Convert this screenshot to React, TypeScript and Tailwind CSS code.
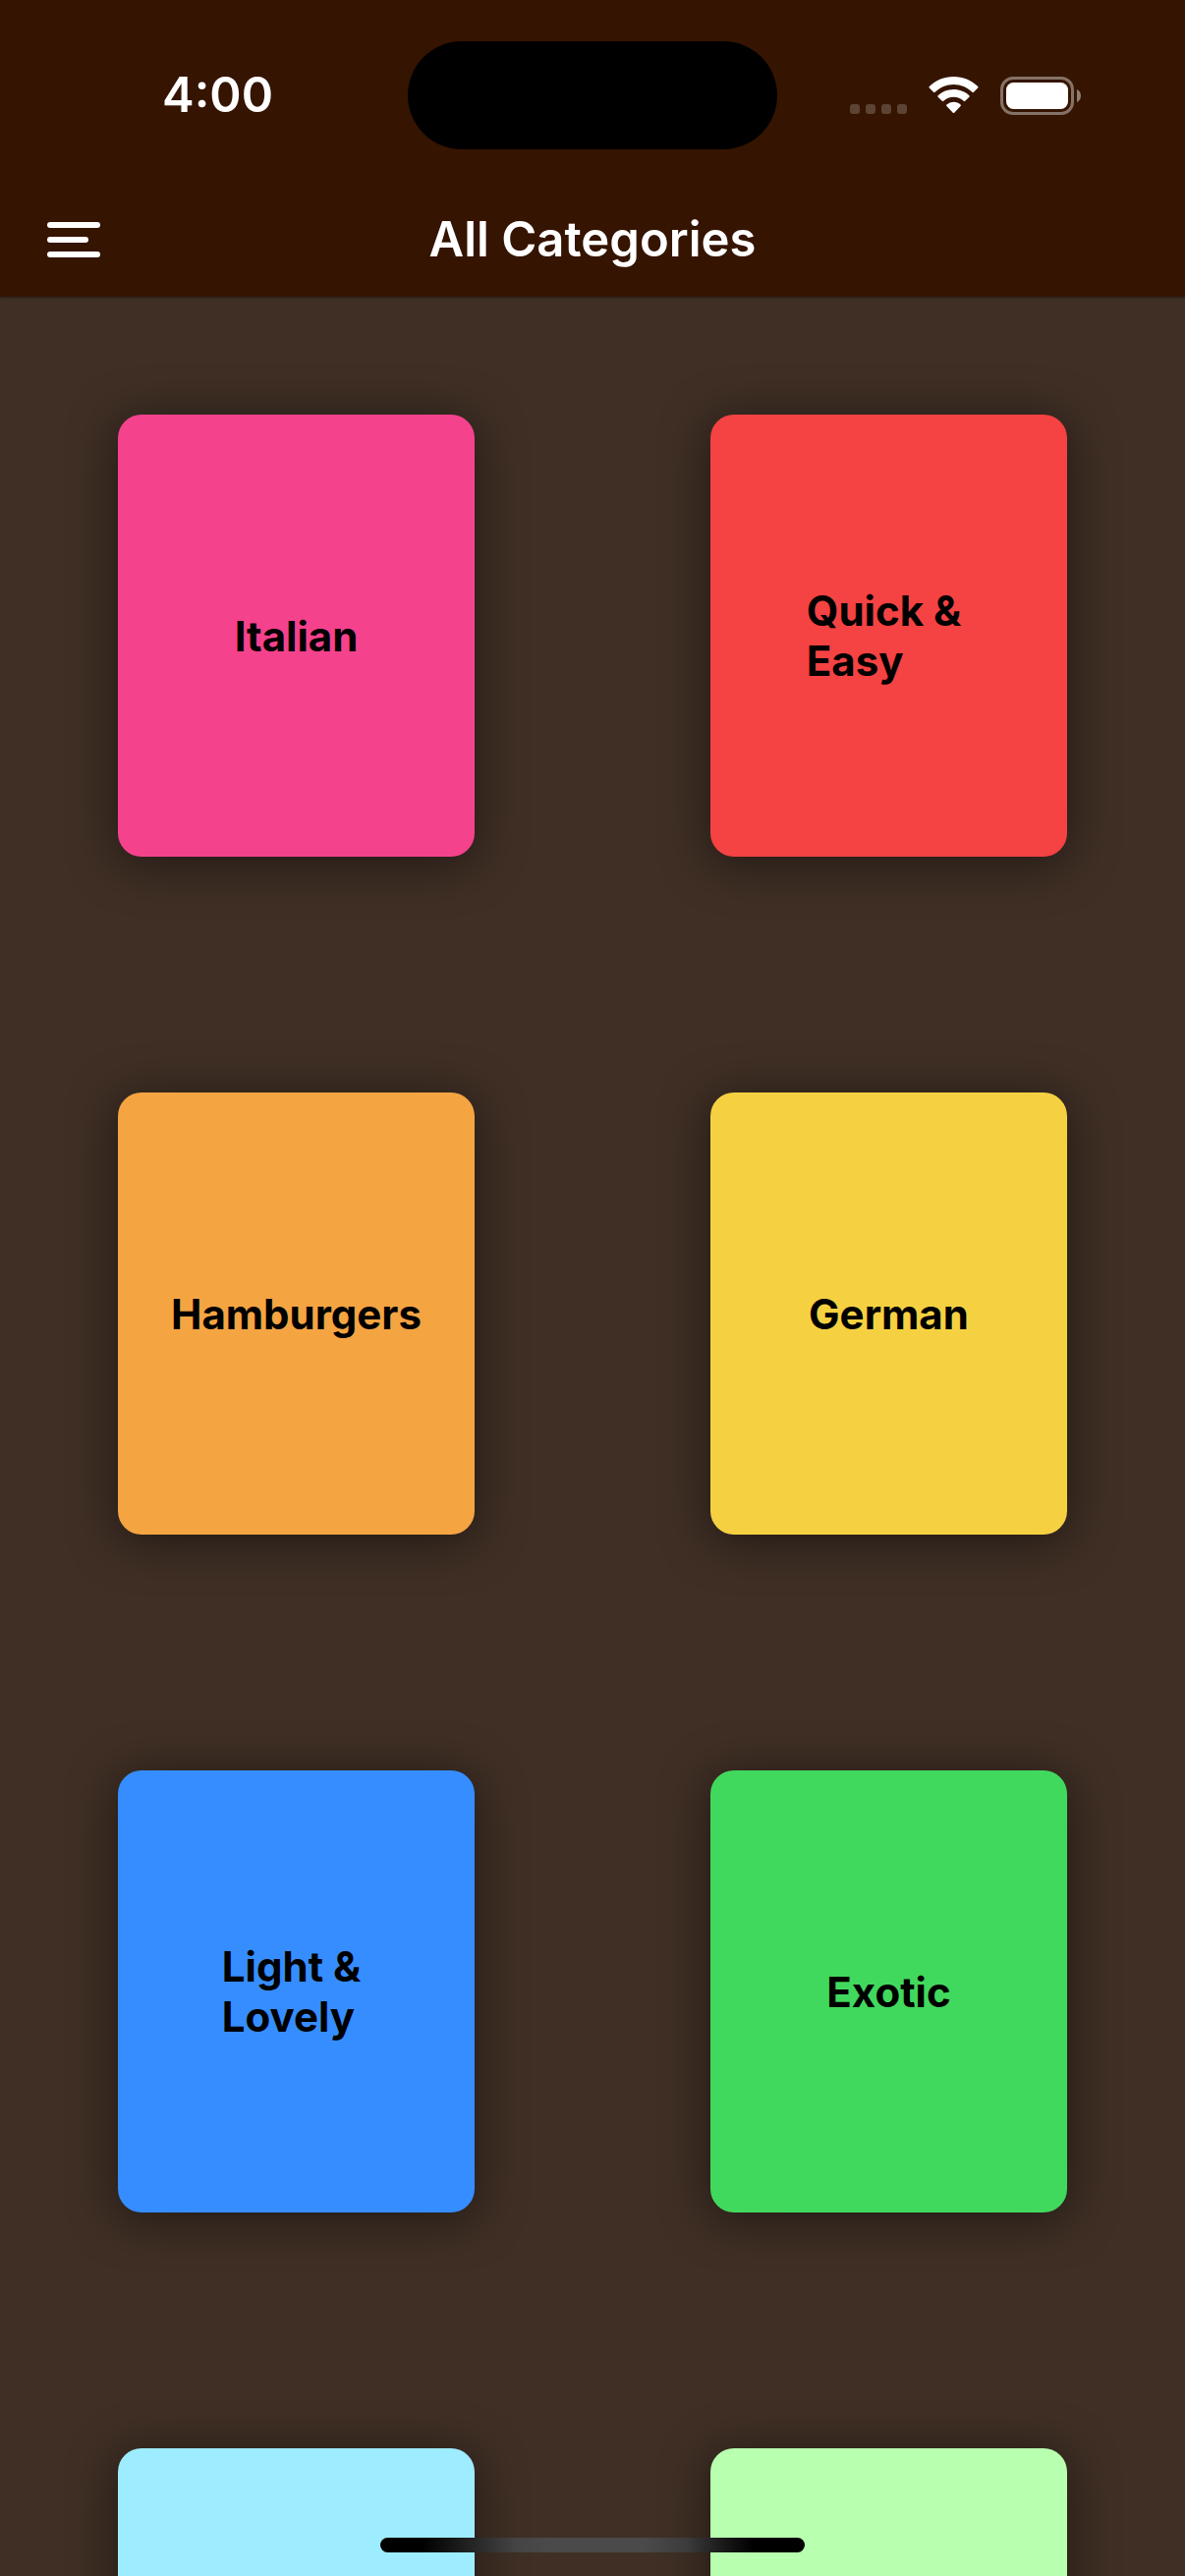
type Category = { id: string; lines: string; color: string };

const categories: Category[] = [
  { id: 'c1', lines: 'Italian', color: 'bg-[#f5428d]' },
  { id: 'c2', lines: 'Quick & \nEasy', color: 'bg-[#f54242]' },
  { id: 'c3', lines: 'Hamburgers', color: 'bg-[#f5a442]' },
  { id: 'c4', lines: 'German', color: 'bg-[#f5d142]' },
  { id: 'c5', lines: 'Light & \nLovely', color: 'bg-[#368dff]' },
  { id: 'c6', lines: 'Exotic', color: 'bg-[#41d95d]' },
  { id: 'c7', lines: '', color: 'bg-[#9eecff]' },
  { id: 'c8', lines: '', color: 'bg-[#b9ffb0]' },
];

function WifiIcon() {
  return (
    <svg className="h-[38px] w-[51px]" viewBox="0 0 51 38" fill="white" aria-label="Wi-Fi">
      <path d="M25.5 0C35 0 43.600 3.700 50.200 9.900q.8.700 0 1.500L46 15.800q-.7.700-1.500 0A27.500 27.500 0 0 0 25.500 8 27.500 27.500 0 0 0 6.500 15.800q-.8.700-1.500 0L.8 11.400q-.8-.8 0-1.500C7.400 3.700 16 0 25.500 0z" />
      <path d="M25.500 13c6.100 0 11.700 2.300 15.900 6.200q.8.700 0 1.500L37.200 24.800q-.7.700-1.500 0a15 15 0 0 0-20.400 0q-.8.700-1.500 0L9.600 20.700q-.8-.8 0-1.500A23.300 23.300 0 0 1 25.500 13z" />
      <path d="M25.500 25.800c2.700 0 5.200 1 7.100 2.700q.7.700 0 1.400L26.200 36.700q-.7.700-1.400 0L18.400 29.900q-.7-.7 0-1.400a10.700 10.700 0 0 1 7.100-2.700z" />
    </svg>
  );
}

function BatteryIcon() {
  return (
    <svg className="h-[39px] w-[82px]" viewBox="0 0 82 39" aria-label="Battery full">
      <rect x="1.5" y="1.5" width="72" height="36" rx="11.5" fill="none" stroke="white" strokeOpacity="0.4" strokeWidth="3" />
      <rect x="6" y="6" width="63" height="27" rx="7.5" fill="white" />
      <path d="M78 13c2.5 1 4 3.5 4 6.500S80.500 25 78 26z" fill="white" fillOpacity="0.45" />
    </svg>
  );
}

function StatusBar() {
  return (
    <div className="grid h-[177px] grid-cols-[1fr_376px_1fr] pt-[42px]">
      <div className="flex h-[110px] items-center justify-center pl-7 text-[49px] leading-[60px] font-semibold">4:00</div>
      <div className="h-[110px] rounded-full bg-black" />
      <div className="flex h-[110px] items-center gap-[22px] pl-[74px]">
        <div className="flex gap-1.5 pt-[27px]">
          {[0, 1, 2, 3].map((dot) => (
            <span key={dot} className="size-[10px] rounded-[3px] bg-white/20" />
          ))}
        </div>
        <WifiIcon />
        <BatteryIcon />
      </div>
    </div>
  );
}

function CategoryTile({ lines, color }: Omit<Category, 'id'>) {
  return (
    <li className="p-[120px]">
      <button
        type="button"
        aria-label={lines ? undefined : 'Category'}
        className={`flex h-[450px] w-full items-center justify-center rounded-3xl text-[42px] leading-[51px] font-bold text-black shadow-[0_6px_48px_rgba(0,0,0,0.5)] ${color}`}
      >
        {lines && <span className="text-left whitespace-pre">{lines}</span>}
      </button>
    </li>
  );
}

export default function App() {
  return (
    <div className="relative flex h-screen flex-col overflow-hidden bg-[#3f2f25] font-['Inter',sans-serif]">
      <header className="z-10 bg-[#351401] text-white shadow-[0_1px_2px_rgba(0,0,0,0.4)]">
        <StatusBar />
        <div className="grid h-[125px] grid-cols-[1fr_auto_1fr] items-center px-12 pt-2">
          <button type="button" aria-label="Open menu" className="flex w-[54px] flex-col gap-[9px]">
            <span className="h-1.5 w-full rounded-full bg-white" />
            <span className="h-1.5 w-[42px] rounded-full bg-white" />
            <span className="h-1.5 w-full rounded-full bg-white" />
          </button>
          <h1 className="text-[49px] leading-[60px] font-semibold">All Categories</h1>
        </div>
      </header>
      <main className="min-h-0 flex-1 overflow-hidden">
        <ul className="grid grid-cols-2">
          {categories.map(({ id, lines, color }) => (
            <CategoryTile key={id} lines={lines} color={color} />
          ))}
        </ul>
      </main>
      <div className="absolute inset-x-0 bottom-6 z-10 flex justify-center">
        <div className="h-[15px] w-[432px] rounded-full bg-[linear-gradient(to_right,#000_10%,#262626_22%,#444_32%,#4a4a4a_40%,#4a4a4a_62%,#3c3c3c_72%,#1c1c1c_80%,#000_88%)]" />
      </div>
    </div>
  );
}
